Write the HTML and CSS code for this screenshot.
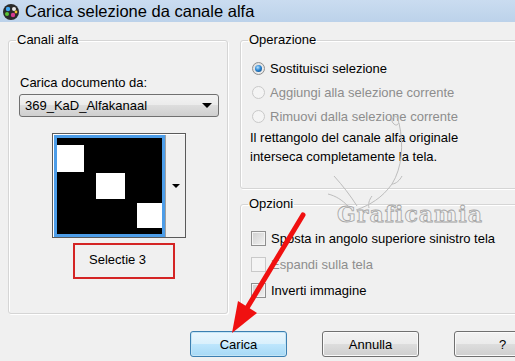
FILE: index.html
```html
<!DOCTYPE html>
<html lang="it">
<head>
    <meta charset="UTF-8">
    <title>Carica selezione da canale alfa</title>
    <link rel="stylesheet" href="styles.css">
</head>
<body>
    <div class="titlebar">
        <svg class="app-icon" width="20" height="20" viewBox="0 0 20 20">
            <circle cx="10" cy="11" r="8" fill="#2a2a2a"/>
            <circle cx="7" cy="8" r="2.2" fill="#3fa9f5"/>
            <circle cx="13" cy="8" r="2" fill="#e8e8e8"/>
            <circle cx="6" cy="13" r="2" fill="#5bc236"/>
            <circle cx="12" cy="14" r="2.2" fill="#d63b8f"/>
            <circle cx="15" cy="11" r="1.4" fill="#f2c12e"/>
        </svg>
        <span class="title">Carica selezione da canale alfa</span>
    </div>

    <div class="dialog">
        <div class="columns">
            <fieldset class="group group-alpha">
                <legend>Canali alfa</legend>
                <div class="field-label">Carica documento da:</div>
                <div class="select">
                    <span>369_KaD_Alfakanaal</span>
                    <span class="select-arrow"></span>
                </div>
                <div class="preview">
                    <div class="thumb">
                        <svg width="105" height="96" viewBox="0 0 105 96">
                            <rect width="105" height="96" fill="#000"/>
                            <rect x="0" y="7" width="27" height="27" fill="#fff"/>
                            <rect x="39" y="35" width="29" height="26" fill="#fff"/>
                            <rect x="80" y="65" width="25" height="25" fill="#fff"/>
                        </svg>
                    </div>
                    <div class="thumb-drop"><span class="arrow-small"></span></div>
                </div>
                <div class="channel-name">Selectie 3</div>
            </fieldset>

            <div class="side">
                <fieldset class="group group-op">
                    <legend>Operazione</legend>
                    <div class="radio-row first"><span class="radio checked"></span>Sostituisci selezione</div>
                    <div class="radio-row disabled"><span class="radio"></span>Aggiungi alla selezione corrente</div>
                    <div class="radio-row disabled"><span class="radio"></span>Rimuovi dalla selezione corrente</div>
                    <p class="note">Il rettangolo del canale alfa originale<br>interseca completamente la tela.</p>
                </fieldset>

                <fieldset class="group group-opt">
                    <legend>Opzioni</legend>
                    <div class="check-row first"><span class="check"></span>Sposta in angolo superiore sinistro tela</div>
                    <div class="check-row disabled"><span class="check"></span>Espandi sulla tela</div>
                    <div class="check-row"><span class="check"></span>Inverti immagine</div>
                </fieldset>
            </div>
        </div>

        <div class="buttons">
            <button class="btn btn-default">Carica</button>
            <button class="btn">Annulla</button>
            <button class="btn">?</button>
        </div>
    </div>

    <div class="watermark">Graficamia</div>

    <svg class="annotation" width="515" height="361" viewBox="0 0 515 361">
        <!-- schizzo del watermark -->
        <g fill="none" stroke="#bdbdbd" stroke-width="1">
            <path d="M398 118 c-4 -4 -9 2 -4 6 c3 3 6 -1 4 -4"/>
            <path d="M399 123 C404 145 402 168 392 184 C382 198 370 205 356 210"/>
            <path d="M392 184 c4 0 8 -4 10 -8"/>
            <path d="M334 176 C343 186 350 195 357 206"/>
            <path d="M328 194 c8 2 14 6 20 12"/>
            <path d="M372 196 c-3 4 -4 8 -3 12"/>
        </g>
        <!-- freccia rossa -->
        <line x1="303" y1="215" x2="247" y2="308" stroke="#f01010" stroke-width="5" stroke-linecap="round"/>
        <polygon points="232,333 238,301 257,313" fill="#f01010"/>
    </svg>
</body>
</html>
```

FILE: styles.css
```css
body {
    margin: 0;
    width: 515px;
    height: 361px;
    overflow: hidden;
    background-color: #f0f0f0;
    font-family: "Liberation Sans", Arial, sans-serif;
    font-size: 13px;
    color: #000000;
}

.titlebar {
    display: flex;
    align-items: center;
    height: 22px;
    background: linear-gradient(#cadcf0, #bcd2ea);
}

.app-icon {
    margin-left: 1px;
    margin-right: 4px;
}

.title {
    font-size: 16.5px;
    color: #000000;
}

.dialog {
    padding: 11px 0 0 8px;
}

.columns {
    display: flex;
    gap: 12px;
}

.group {
    margin: 0;
    padding: 0 7px;
    border: 1px solid #d5d5d5;
    border-radius: 3px;
    box-shadow: inset 1px 1px 0 #ffffff, 1px 1px 0 #ffffff;
    box-sizing: border-box;
}

.group legend {
    padding: 0 1px;
    line-height: 14px;
}

.group-alpha {
    width: 220px;
    height: 281px;
    flex-shrink: 0;
}

.field-label {
    margin: 28px 0 0 4px;
    line-height: 15px;
}

.select {
    display: flex;
    justify-content: space-between;
    align-items: center;
    width: 200px;
    height: 23px;
    margin: 4px 0 0 3px;
    padding: 0 6px 0 5px;
    box-sizing: border-box;
    border: 1px solid #707070;
    border-radius: 3px;
    background: linear-gradient(#f2f2f2 0%, #ebebeb 50%, #dddddd 50%, #cfcfcf 100%);
}

.select-arrow {
    width: 0;
    height: 0;
    border-left: 5px solid transparent;
    border-right: 5px solid transparent;
    border-top: 5px solid #000000;
}

.preview {
    display: flex;
    width: 134px;
    height: 105px;
    margin: 16px 0 0 36px;
    padding: 1px 0 0 1px;
    box-sizing: border-box;
    border: 1px solid #5a5a5a;
    background-color: #ffffff;
}

.thumb {
    width: 111px;
    height: 102px;
    border: 3px solid #4d9de8;
    box-sizing: border-box;
    background-color: #000000;
}

.thumb svg {
    display: block;
}

.thumb-drop {
    display: flex;
    align-items: center;
    justify-content: center;
    width: 20px;
    background-color: #f0f0f0;
    border-left: 1px solid #a0a0a0;
    box-sizing: border-box;
}

.arrow-small {
    width: 0;
    height: 0;
    border-left: 4px solid transparent;
    border-right: 4px solid transparent;
    border-top: 4px solid #000000;
}

.channel-name {
    width: 102px;
    height: 36px;
    margin: 5px 0 0 57px;
    padding-left: 14px;
    box-sizing: border-box;
    border: 2px solid #d42424;
    line-height: 30px;
}

.side {
    display: flex;
    flex-direction: column;
    gap: 8px;
    width: 290px;
    flex-shrink: 0;
}

.group-op {
    height: 156px;
}

.group-opt {
    height: 117px;
}

.radio-row {
    display: flex;
    align-items: center;
    height: 24px;
    margin-left: 4px;
    white-space: nowrap;
}

.radio-row.first {
    margin-top: 9px;
}

.radio {
    width: 13px;
    height: 13px;
    margin-right: 5px;
    box-sizing: border-box;
    border: 1px solid #8e8f8f;
    border-radius: 50%;
    background: radial-gradient(circle at 60% 60%, #f6f6f6, #d8d8d8);
    display: flex;
    align-items: center;
    justify-content: center;
}

.radio.checked::after {
    content: "";
    width: 7px;
    height: 7px;
    border-radius: 50%;
    background: radial-gradient(circle at 40% 35%, #b8e3ff 0%, #2c86d2 45%, #0d3f73 100%);
}

.disabled {
    color: #8d8d8d;
}

.disabled .radio,
.disabled .check {
    border-color: #c9c9c9;
    background: #f4f4f4;
}

.note {
    margin: 0 0 0 2px;
    line-height: 19px;
    white-space: nowrap;
}

.check-row {
    display: flex;
    align-items: center;
    height: 26px;
    margin-left: 3px;
    white-space: nowrap;
}

.check-row.first {
    margin-top: 14px;
}

.check {
    width: 15px;
    height: 15px;
    margin-right: 5px;
    box-sizing: border-box;
    border: 1px solid #8f8f8f;
    background: linear-gradient(135deg, #cfcfcf, #f2f2f2);
    box-shadow: inset 0 0 0 1px #f4f4f4;
}

.buttons {
    display: flex;
    gap: 35px;
    margin-top: 17px;
    padding-left: 182px;
}

.btn {
    flex-shrink: 0;
    width: 97px;
    height: 26px;
    padding: 0;
    border: 1px solid #707070;
    border-radius: 3px;
    background: linear-gradient(#f2f2f2 0%, #ebebeb 50%, #dddddd 50%, #cfcfcf 100%);
    box-shadow: inset 0 0 0 1px #fafafa;
    font-family: inherit;
    font-size: 13px;
    color: #000000;
}

.btn-default {
    border-color: #3c7fb1;
    background: linear-gradient(#eaf6fd 0%, #d9f0fc 50%, #bee6fd 50%, #a7d9f5 100%);
    box-shadow: inset 0 0 0 1px #c4e5f6;
}

.watermark {
    position: absolute;
    left: 337px;
    top: 203px;
    font-family: "DejaVu Serif", serif;
    font-weight: bold;
    font-size: 22px;
    line-height: 22px;
    letter-spacing: 1px;
    color: #f2f2f2;
    -webkit-text-stroke: 0.8px #a4a4a4;
}

.annotation {
    position: absolute;
    left: 0;
    top: 0;
    pointer-events: none;
}
```
